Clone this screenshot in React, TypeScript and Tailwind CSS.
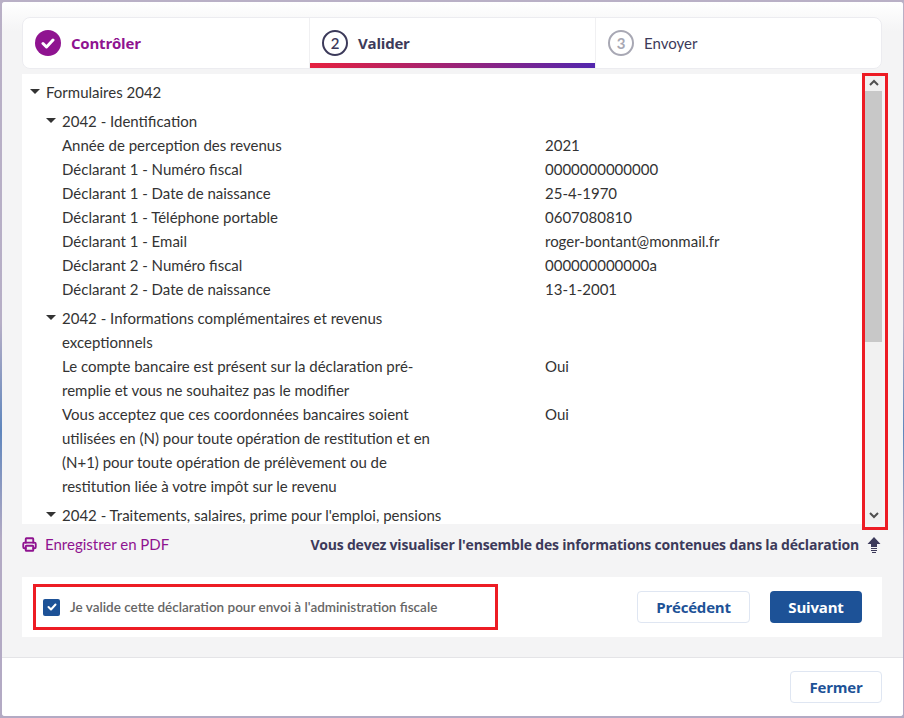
import { Printer } from "lucide-react";

const identification = [
  ["Année de perception des revenus", "2021"],
  ["Déclarant 1 - Numéro fiscal", "0000000000000"],
  ["Déclarant 1 - Date de naissance", "25-4-1970"],
  ["Déclarant 1 - Téléphone portable", "0607080810"],
  ["Déclarant 1 - Email", "roger-bontant@monmail.fr"],
  ["Déclarant 2 - Numéro fiscal", "000000000000a"],
  ["Déclarant 2 - Date de naissance", "13-1-2001"],
];

const complements = [
  [
    "Le compte bancaire est présent sur la déclaration pré-remplie et vous ne souhaitez pas le modifier",
    "Oui",
  ],
  [
    "Vous acceptez que ces coordonnées bancaires soient utilisées en (N) pour toute opération de restitution et en (N+1) pour toute opération de prélèvement ou de restitution liée à votre impôt sur le revenu",
    "Oui",
  ],
];

function Caret() {
  return (
    <span className="w-0 h-0 border-x-[5px] border-x-transparent border-t-[5px] border-t-[#333] absolute -left-[16px] top-[9px]" />
  );
}

function Heading({ label }: { label: string }) {
  return (
    <div className="relative w-[392px] mt-[5px]">
      <Caret />
      {label}
    </div>
  );
}

function Row({ label, value }: { label: string; value: string }) {
  return (
    <div className="flex">
      <div className="w-[392px] shrink-0">{label}</div>
      <div className="ml-[91px]">{value}</div>
    </div>
  );
}

function Scrollbar() {
  return (
    <div className="w-[17px] shrink-0 bg-[#f1f1f1] flex flex-col">
      <div className="h-[17px] flex items-center justify-center">
        <svg width="10" height="7" viewBox="0 0 10 7" fill="none" stroke="#505050" strokeWidth="2">
          <path d="M1 6l4-4 4 4" />
        </svg>
      </div>
      <div className="h-[251px] bg-[#c8c8c8]" />
      <div className="flex-1" />
      <div className="h-[17px] flex items-center justify-center">
        <svg width="10" height="7" viewBox="0 0 10 7" fill="none" stroke="#505050" strokeWidth="2">
          <path d="M1 1l4 4 4-4" />
        </svg>
      </div>
    </div>
  );
}

export default function App() {
  return (
    <div className="relative w-[904px] h-[718px] overflow-hidden bg-[linear-gradient(180deg,#b9b0c6_0%,#b6aec6_45%,#5f86bd_60%,#b3aac4_75%,#b3aac4_100%)] font-['Lato',sans-serif] pt-[2px] pl-[2px] pr-[1px] pb-[2px]">
      <div className="h-full rounded-[3px] overflow-hidden bg-[#f4f4f5] flex flex-col">
        <div className="h-[655px] shrink-0 px-[20px] pt-[15px] bg-[linear-gradient(180deg,#ffffff_0px,#f4f4f5_30px)]">
          {/* steps */}
          <div className="w-[860px] h-[52px] bg-white rounded-lg border border-[#ececf0] flex overflow-hidden">
            <div className="w-[287px] flex items-center pl-[12px] gap-[10px] border-r border-[#f0f0f2]">
              <div className="w-[26px] h-[26px] rounded-full bg-[#8f1390] flex items-center justify-center">
                <svg width="14" height="11" viewBox="0 0 14 11" fill="none" stroke="#fff" strokeWidth="3" strokeLinecap="round" strokeLinejoin="round">
                  <path d="M2 5.5l3.5 3.5L12 2" />
                </svg>
              </div>
              <span className="text-[15px] font-bold text-[#8f1390] font-['Open_Sans',sans-serif] tracking-[-0.2px]">Contrôler</span>
            </div>
            <div className="w-[285px] relative flex items-center pl-[12px] gap-[10px]">
              <div className="w-[26px] h-[26px] rounded-full border-2 border-[#3c3a5a] flex items-center justify-center text-[15px] font-semibold text-[#3c3a5a]">2</div>
              <span className="text-[15px] font-bold text-[#3c3a5a] font-['Open_Sans',sans-serif] tracking-[-0.2px]">Valider</span>
              <div className="absolute left-0 right-0 bottom-0 h-[5px] bg-[linear-gradient(90deg,#e6203f,#5226ae)]" />
            </div>
            <div className="flex-1 flex items-center pl-[12px] gap-[10px] border-l border-[#f0f0f2]">
              <div className="w-[26px] h-[26px] rounded-full border-2 border-[#a8a8b4] flex items-center justify-center text-[15px] font-bold text-[#a8a8b4]">3</div>
              <span className="text-[15px] text-[#3c3a5a]">Envoyer</span>
            </div>
          </div>

          {/* declaration */}
          <div className="mt-[5px] h-[450px] w-[860px] flex bg-white">
            <div className="flex-1 overflow-hidden text-[15px] leading-[24px] text-[#333] pl-[40px] pt-[6px]">
              <div className="relative -ml-[16px]">
                <Caret />
                Formulaires 2042
              </div>
              <Heading label="2042 - Identification" />
              {identification.map(([label, value]) => (
                <Row key={label} label={label} value={value} />
              ))}
              <Heading label="2042 - Informations complémentaires et revenus exceptionnels" />
              {complements.map(([label, value]) => (
                <Row key={label} label={label} value={value} />
              ))}
              <Heading label="2042 - Traitements, salaires, prime pour l'emploi, pensions et rentes" />
            </div>
            <Scrollbar />
          </div>

          {/* save + hint */}
          <div className="w-[860px] h-[41px] flex items-center text-[15px]">
            <Printer size={15} strokeWidth={3} className="text-[#8f1390]" />
            <span className="ml-[8px] text-[#8f1390]">Enregistrer en PDF</span>
            <span className="ml-auto font-['Open_Sans',sans-serif] text-[14px] font-bold text-[#3c3a5a] tracking-[-0.2px]">
              Vous devez visualiser l'ensemble des informations contenues dans la déclaration
            </span>
            <svg className="ml-[8px] mr-[1px]" width="14" height="16" viewBox="0 0 14 16" fill="#3c3a5a">
              <path d="M7 0l6.5 7H10v3H4V7H.5zM4 11h6v1H4zM4 13h6v1H4zM5 15h4v1H5z" />
            </svg>
          </div>

          {/* validation */}
          <div className="mt-[12px] w-[860px] h-[60px] bg-white flex items-center pl-[21px] pr-[20px]">
            <div className="w-[17px] h-[17px] rounded-[2px] bg-[#1d5297] flex items-center justify-center">
              <svg width="10" height="8" viewBox="0 0 10 8" fill="none" stroke="#fff" strokeWidth="2" strokeLinecap="round" strokeLinejoin="round">
                <path d="M1.5 4l2.5 2.5 4.5-5" />
              </svg>
            </div>
            <span className="ml-[10px] text-[13.5px] font-semibold text-[#666]">Je valide cette déclaration pour envoi à l'administration fiscale</span>
            <button className="ml-auto w-[113px] h-[32px] rounded-[4px] bg-white border border-[#dfe6f2] text-[15px] font-bold text-[#1d5297] font-['Open_Sans',sans-serif] tracking-[-0.2px]">Précédent</button>
            <button className="ml-[20px] w-[92px] h-[32px] rounded-[4px] bg-[#1d5297] text-[15px] font-bold text-white font-['Open_Sans',sans-serif] tracking-[-0.2px]">Suivant</button>
          </div>
        </div>

        {/* footer */}
        <div className="flex-1 bg-white border-t border-[#e4e4e7] flex items-center justify-end pr-[21px]">
          <button className="w-[92px] h-[32px] rounded-[4px] bg-white border border-[#dfe6f2] text-[15px] font-bold text-[#1d5297] font-['Open_Sans',sans-serif] tracking-[-0.2px]">Fermer</button>
        </div>
      </div>

      {/* annotations drawn over the capture */}
      <div className="absolute left-[862px] top-[73px] w-[26px] h-[457px] border-[3px] border-[#ed1c24]" />
      <div className="absolute left-[33px] top-[584px] w-[465px] h-[46px] border-[3px] border-[#ed1c24]" />
    </div>
  );
}
